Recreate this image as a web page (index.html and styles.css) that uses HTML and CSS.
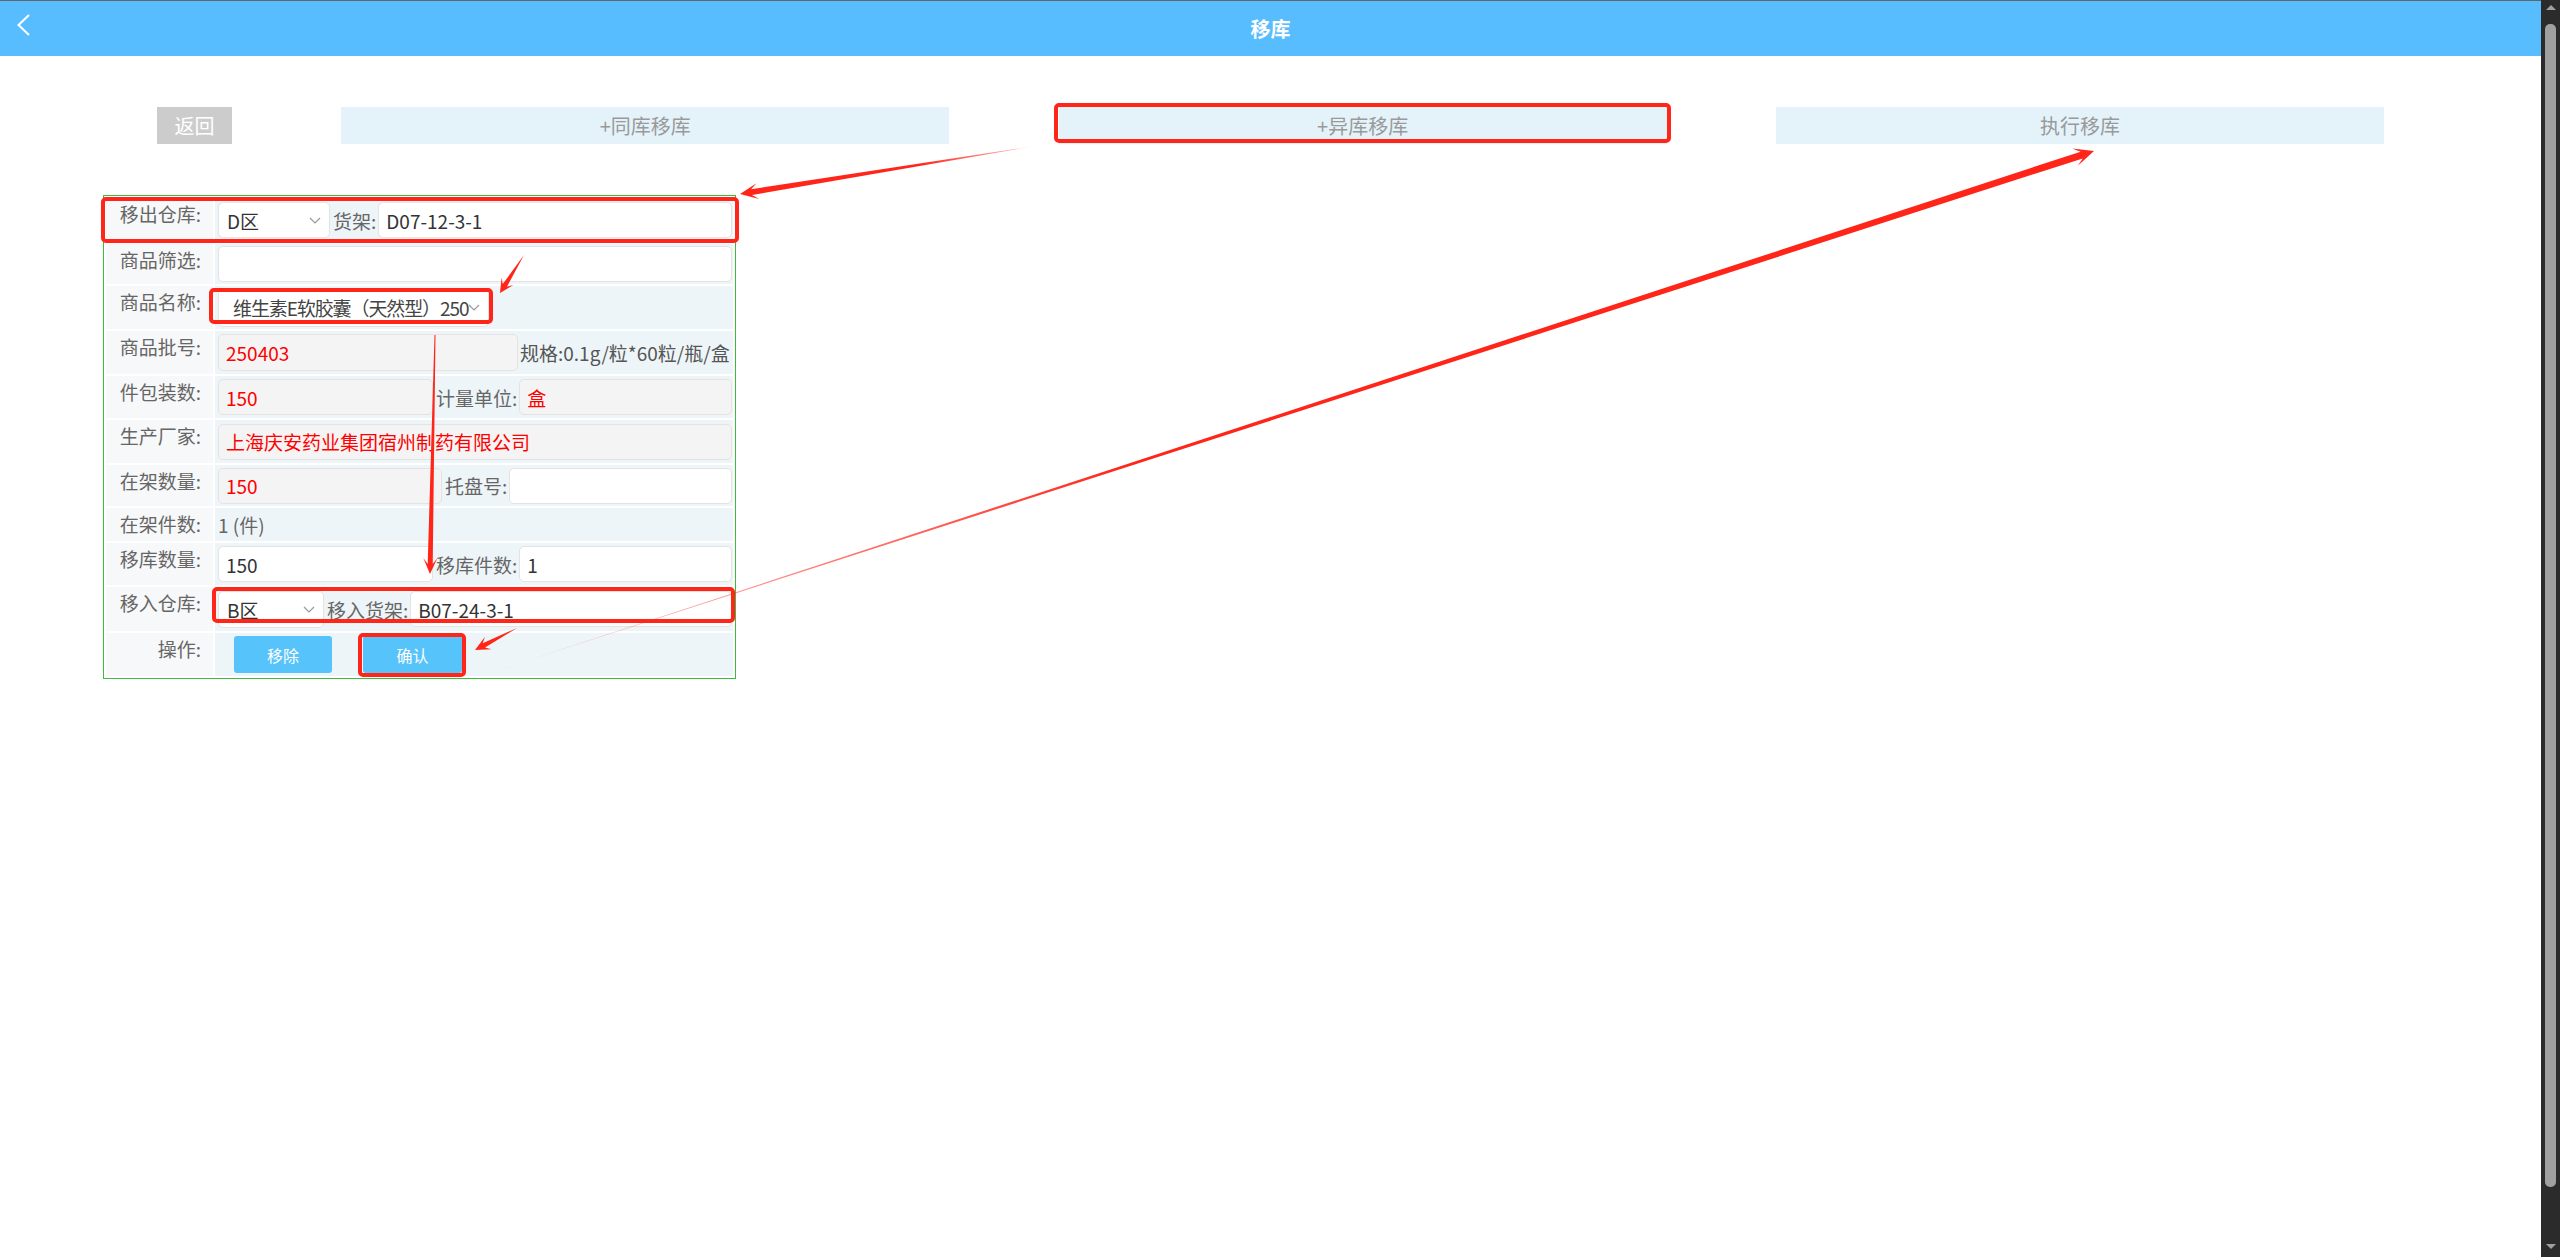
FILE: index.html
```html
<!DOCTYPE html>
<html lang="zh-CN">
<head>
<meta charset="utf-8">
<title>移库</title>
<link rel="stylesheet" href="styles.css">
</head>
<body>
<div class="app">
  <div class="page">
    <div class="topline"></div>
    <header class="navbar">
      <svg class="back" width="14" height="22" viewBox="0 0 14 22"><polyline points="12,1 1.5,11 12,21" fill="none" stroke="#fff" stroke-width="2"/></svg>
      <h1 class="title">移库</h1>
      <span></span>
    </header>

    <div class="toolbar">
      <div class="btn-return">返回</div>
      <div class="tab">+同库移库</div>
      <div class="tab">+异库移库</div>
      <div class="tab">执行移库</div>
    </div>

    <div class="form">
      <div class="lbl">移出仓库:</div>
      <div class="val">
        <div class="field sel-wh">D区<svg class="chev" width="12" height="7" viewBox="0 0 12 7"><polyline points="1,1 6,6 11,1" fill="none" stroke="#999" stroke-width="1.2"/></svg></div>
        <span class="inline-lbl">货架:</span>
        <div class="field grow">D07-12-3-1</div>
      </div>

      <div class="lbl">商品筛选:</div>
      <div class="val"><div class="field grow"></div></div>

      <div class="lbl">商品名称:</div>
      <div class="val">
        <div class="field sel-goods"><span class="clip">维生素E软胶囊（天然型）250</span><svg class="chev" width="12" height="7" viewBox="0 0 12 7"><polyline points="1,1 6,6 11,1" fill="none" stroke="#999" stroke-width="1.2"/></svg></div>
      </div>

      <div class="lbl">商品批号:</div>
      <div class="val">
        <div class="field ro red f-batch">250403</div>
        <span class="spec">规格:0.1g/粒*60粒/瓶/盒</span>
      </div>

      <div class="lbl">件包装数:</div>
      <div class="val">
        <div class="field ro red f-half">150</div>
        <span class="inline-lbl">计量单位:</span>
        <div class="field ro red grow">盒</div>
      </div>

      <div class="lbl">生产厂家:</div>
      <div class="val"><div class="field ro red grow">上海庆安药业集团宿州制药有限公司</div></div>

      <div class="lbl">在架数量:</div>
      <div class="val">
        <div class="field ro red f-stock">150</div>
        <span class="inline-lbl">托盘号:</span>
        <div class="field grow"></div>
      </div>

      <div class="lbl">在架件数:</div>
      <div class="val"><span class="plain">1 (件)</span></div>

      <div class="lbl">移库数量:</div>
      <div class="val">
        <div class="field f-half">150</div>
        <span class="inline-lbl">移库件数:</span>
        <div class="field grow">1</div>
      </div>

      <div class="lbl">移入仓库:</div>
      <div class="val">
        <div class="field sel-in">B区<svg class="chev" width="12" height="7" viewBox="0 0 12 7"><polyline points="1,1 6,6 11,1" fill="none" stroke="#999" stroke-width="1.2"/></svg></div>
        <span class="inline-lbl">移入货架:</span>
        <div class="field grow">B07-24-3-1</div>
      </div>

      <div class="lbl">操作:</div>
      <div class="val">
        <div class="btn-op btn-remove">移除</div>
        <div class="btn-op btn-confirm">确认</div>
      </div>
    </div>
  </div>

  <div class="scrollbar">
    <span class="sb-up"></span>
    <span class="sb-thumb"></span>
    <span class="sb-down"></span>
  </div>

  <svg class="annot" width="2541" height="1257" viewBox="0 0 2541 1257">
    <defs>
      <linearGradient id="fade1" gradientUnits="userSpaceOnUse" x1="1035" y1="146" x2="920" y2="165">
        <stop offset="0" stop-color="#ff2519" stop-opacity="0.25"/>
        <stop offset="1" stop-color="#ff2519"/>
      </linearGradient>
      <linearGradient id="fade5" gradientUnits="userSpaceOnUse" x1="492" y1="672" x2="1130" y2="464">
        <stop offset="0" stop-color="#ff2519" stop-opacity="0.15"/>
        <stop offset="1" stop-color="#ff2519"/>
      </linearGradient>
    </defs>
    <g fill="none" stroke="#ff2519" stroke-width="4">
      <rect x="1056" y="105" width="613" height="36" rx="3"/>
      <rect x="103" y="199" width="634" height="42" rx="3"/>
      <rect x="211" y="290" width="280" height="32" rx="3"/>
      <rect x="214" y="589" width="519" height="32" rx="3"/>
      <rect x="360" y="635" width="104" height="40" rx="3"/>
    </g>
    <g fill="#ff2519">
      <polygon fill="url(#fade1)" points="1035,146 751.1,189.2 756.5,183.2 740,194 759.1,199 752,195.1"/>
      <polygon points="524,255 502.7,284.1 501.6,277.4 500,293 513.4,284.9 506.9,286.7"/>
      <polygon points="434.5,335 427.7,564 423.3,557.9 430,574 437.3,558.2 432.7,564 435.5,335"/>
      <polygon points="517,628 482.7,643.2 485,636.8 475,650 491.5,649.2 485,647.6"/>
      <polygon fill="url(#fade5)" points="492,672 2082.7,158.4 2077.8,165.8 2094,151 2072.2,148.6 2080.6,151.7"/>
    </g>
  </svg>
</div>
</body>
</html>
```

FILE: styles.css
```css
* { box-sizing: border-box; }

html, body {
  margin: 0;
  height: 100%;
}

body {
  font-family: "Noto Sans CJK SC", "Noto Sans", sans-serif;
  background: #fff;
  color: #333;
}

.app {
  position: relative;
  display: flex;
  height: 100vh;
  overflow: hidden;
}

.page {
  flex: 1;
  min-width: 0;
  display: flex;
  flex-direction: column;
}

.topline {
  height: 1px;
  background: #62666a;
}

.navbar {
  height: 55px;
  background: #58bdff;
  display: grid;
  grid-template-columns: 1fr auto 1fr;
  align-items: center;
}

.back {
  align-self: start;
  margin: 13px 0 0 17px;
}

.title {
  margin: 0;
  font-size: 20px;
  font-weight: bold;
  color: #fff;
  line-height: 1;
}

.toolbar {
  display: flex;
  justify-content: space-between;
  padding: 51px 157px 0;
}

.btn-return,
.tab {
  height: 37px;
  display: flex;
  align-items: center;
  justify-content: center;
  font-size: 20px;
}

.btn-return {
  width: 75px;
  background: #cccccc;
  color: #fff;
}

.tab {
  width: 608px;
  background: #e4f3fa;
  color: #9a9a9a;
}

.form {
  margin: 51px 0 0 103px;
  width: 633px;
  border: 1px solid #3dbb3d;
  padding: 2px;
  display: grid;
  grid-template-columns: 107px 518px;
  grid-template-rows: 44px 40px 43px 43px 42px 43px 41px 33px 42px 44px 43px;
  gap: 2px;
  font-size: 19px;
}

.lbl {
  background: #f7f8f9;
  color: #666;
  text-align: right;
  padding: 3px 12px 0 0;
  line-height: 26px;
  white-space: nowrap;
}

.val {
  background: #eef5f8;
  display: flex;
  align-items: center;
  padding: 0 1px 0 3px;
  min-width: 0;
}

.field {
  height: 36px;
  border: 1px solid #e3e3e3;
  border-radius: 5px;
  background: #fff;
  padding: 0 7px;
  display: flex;
  align-items: center;
  color: #333;
  white-space: nowrap;
  overflow: hidden;
}

.field.ro { background: #f4f4f4; }
.field.red { color: #f00; }

.grow {
  flex: 1;
  min-width: 0;
}

.chev {
  margin-left: auto;
  flex: none;
}

.sel-wh { width: 112px; padding: 0 8px; }
.sel-in { width: 106px; padding: 0 8px; height: 37px; }
.sel-goods {
  width: 271px;
  height: 38px;
  padding: 0 11px 0 14px;
}

.clip {
  flex: none;
  white-space: nowrap;
  letter-spacing: -1.1px;
  color: #444;
}

.f-batch { width: 300px; height: 37px; }
.f-half { width: 215px; }
.f-stock { width: 224px; }

.inline-lbl {
  color: #666;
  margin: 0 2px 0 3px;
  white-space: nowrap;
}

.spec {
  color: #555;
  margin-left: 2px;
  white-space: nowrap;
}

.plain {
  color: #666;
}

.btn-op {
  width: 98px;
  height: 37px;
  background: #57c3fb;
  color: #fff;
  font-size: 16px;
  border-radius: 3px;
  display: flex;
  align-items: center;
  justify-content: center;
}

.btn-remove { margin-left: 16px; }
.btn-confirm { margin-left: 31px; width: 99px; }

.scrollbar {
  width: 19px;
  flex: none;
  background: #2b2b2b;
  display: flex;
  flex-direction: column;
  align-items: center;
}

.sb-up,
.sb-down {
  width: 0;
  height: 0;
  border-left: 5px solid transparent;
  border-right: 5px solid transparent;
}

.sb-up {
  margin-top: 5px;
  border-bottom: 5px solid #a0a0a0;
}

.sb-thumb {
  width: 11px;
  margin-top: 14px;
  height: 1163px;
  background: #a0a0a0;
  border-radius: 5px;
}

.sb-down {
  margin-top: 57px;
  border-top: 5px solid #a0a0a0;
}

.annot {
  position: absolute;
  left: 0;
  top: 0;
  pointer-events: none;
}
```
